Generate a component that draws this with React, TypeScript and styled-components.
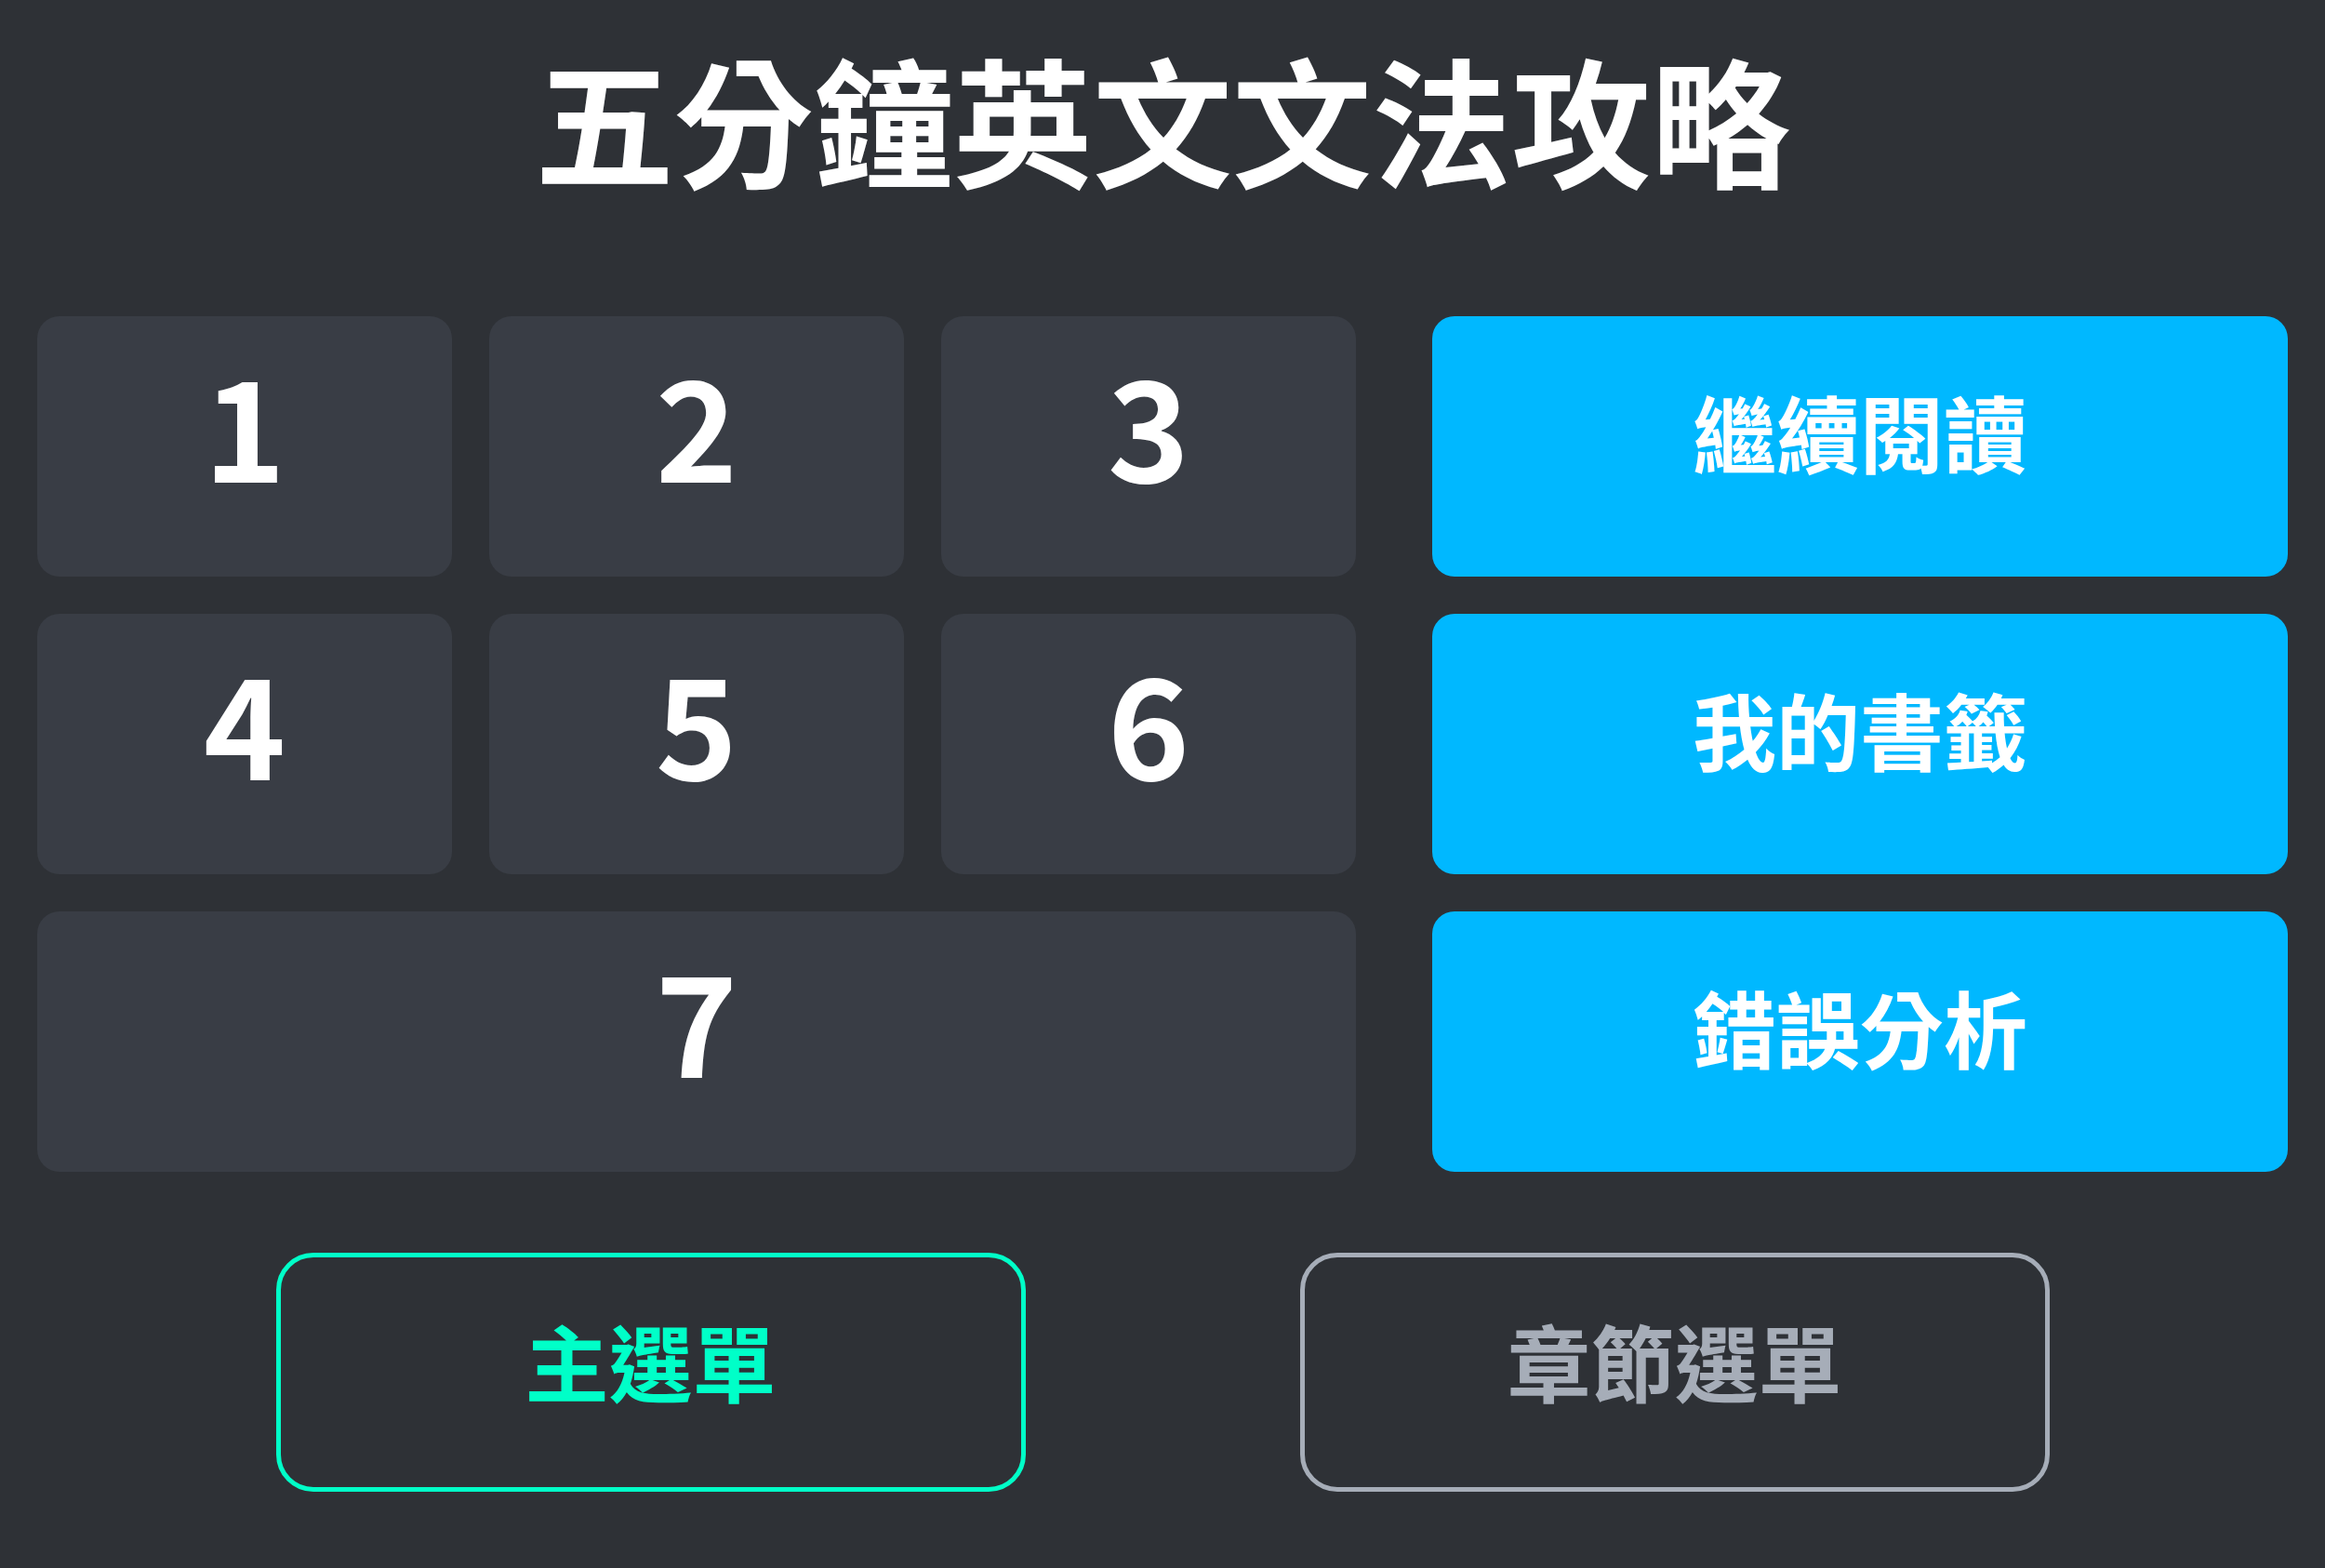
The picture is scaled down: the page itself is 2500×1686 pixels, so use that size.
import React from "react";
import styled, { createGlobalStyle } from "styled-components";

const GlobalStyle = createGlobalStyle`
  html, body {
    margin: 0;
    padding: 0;
    background: #2e3136;
  }
  body {
    font-family: "Noto Sans CJK TC", "Noto Sans", sans-serif;
  }
`;

const Page = styled.div`
  width: 2500px;
  height: 1686px;
  box-sizing: border-box;
  padding: 0 40px;
  background: #2e3136;
  display: flex;
  flex-direction: column;
  align-items: stretch;
`;

const Title = styled.h1`
  margin: 0;
  height: 340px;
  display: flex;
  justify-content: center;
  align-items: flex-start;
  padding-top: 36px;
  box-sizing: border-box;
  font-size: 150px;
  line-height: 1.2;
  font-weight: 700;
  color: #ffffff;
`;

const Board = styled.div`
  display: grid;
  grid-template-columns: 1418px 920px;
  column-gap: 82px;
`;

const Chapters = styled.div`
  display: grid;
  grid-template-columns: repeat(3, 446px);
  grid-auto-rows: 280px;
  gap: 40px;
`;

const ChapterTile = styled.button<{ $wide?: boolean }>`
  grid-column: ${p => (p.$wide ? "1 / span 3" : "auto")};
  border: none;
  border-radius: 24px;
  background: #393d45;
  color: #ffffff;
  font-family: inherit;
  font-size: 150px;
  font-weight: 700;
  line-height: 1;
  padding: 0 0 52px;
  display: flex;
  align-items: center;
  justify-content: center;
  cursor: pointer;
`;

const Actions = styled.div`
  display: grid;
  grid-auto-rows: 280px;
  row-gap: 40px;
`;

const ActionButton = styled.button`
  border: none;
  border-radius: 24px;
  background: #00b8ff;
  color: #ffffff;
  font-family: inherit;
  font-size: 90px;
  font-weight: 700;
  line-height: 1;
  padding: 0 0 34px;
  display: flex;
  align-items: center;
  justify-content: center;
  cursor: pointer;
`;

const NavRow = styled.div`
  margin-top: 87px;
  display: flex;
  justify-content: center;
  gap: 295px;
`;

const NavButton = styled.button<{ $tone: string }>`
  width: 806px;
  height: 257px;
  box-sizing: border-box;
  border: 5px solid ${p => p.$tone};
  border-radius: 40px;
  background: transparent;
  color: ${p => p.$tone};
  font-family: inherit;
  font-size: 90px;
  font-weight: 700;
  line-height: 1;
  padding: 0 0 28px;
  display: flex;
  align-items: center;
  justify-content: center;
  cursor: pointer;
`;

const chapters = ["1", "2", "3", "4", "5", "6"];
const actions = ["繼續閱讀", "我的書籤", "錯誤分析"];

export default function App() {
  return (
    <>
      <GlobalStyle />
      <Page>
        <Title>五分鐘英文文法攻略</Title>
        <Board>
          <Chapters>
            {chapters.map(n => (
              <ChapterTile key={n}>{n}</ChapterTile>
            ))}
            <ChapterTile $wide>7</ChapterTile>
          </Chapters>
          <Actions>
            {actions.map(a => (
              <ActionButton key={a}>{a}</ActionButton>
            ))}
          </Actions>
        </Board>
        <NavRow>
          <NavButton $tone="#00ffc8">主選單</NavButton>
          <NavButton $tone="#a6adb8">章節選單</NavButton>
        </NavRow>
      </Page>
    </>
  );
}
